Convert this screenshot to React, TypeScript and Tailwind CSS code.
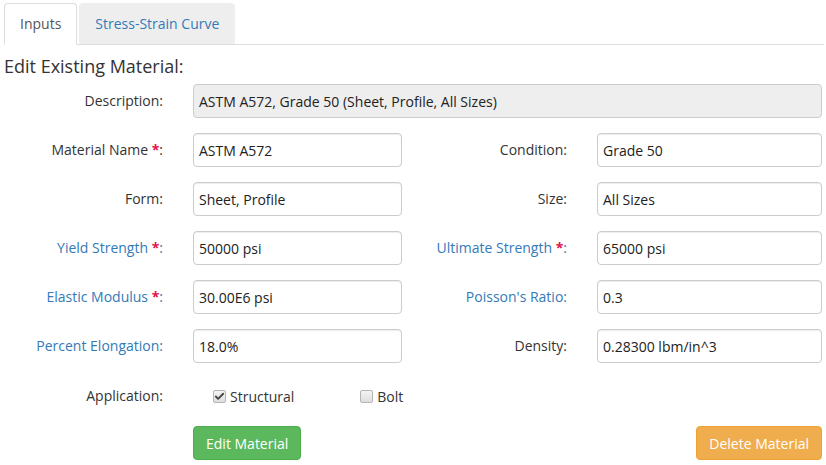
import { Check } from 'lucide-react';

type Field = { label: string; value: string; blue?: boolean; req?: boolean };

const rows: [Field, Field][] = [
  [
    { label: 'Material Name', value: 'ASTM A572', req: true },
    { label: 'Condition', value: 'Grade 50' },
  ],
  [
    { label: 'Form', value: 'Sheet, Profile' },
    { label: 'Size', value: 'All Sizes' },
  ],
  [
    { label: 'Yield Strength', value: '50000 psi', blue: true, req: true },
    { label: 'Ultimate Strength', value: '65000 psi', blue: true, req: true },
  ],
  [
    { label: 'Elastic Modulus', value: '30.00E6 psi', blue: true, req: true },
    { label: "Poisson's Ratio", value: '0.3', blue: true },
  ],
  [
    { label: 'Percent Elongation', value: '18.0%', blue: true },
    { label: 'Density', value: '0.28300 lbm/in^3' },
  ],
];

function Label({ f, width }: { f: Field; width: string }) {
  return (
    <div className={`${width} shrink-0 text-right leading-[34px] ${f.blue ? 'text-[#337ab7]' : 'text-[#333]'}`}>
      {f.label}
      {f.req && <span className="text-[#e0144c] font-bold"> *</span>}:
    </div>
  );
}

function Input({ value, width }: { value: string; width: string }) {
  return (
    <div
      className={`${width} shrink-0 ml-[30px] h-[34px] px-[5px] flex items-center border border-[#ccc] rounded-[4px] bg-white text-[#222] shadow-[inset_0_1px_1px_rgba(0,0,0,0.075)]`}
    >
      {value}
    </div>
  );
}

function Box({ checked }: { checked?: boolean }) {
  return (
    <span className="w-[13px] h-[13px] rounded-[2px] border border-[#b5b5b5] bg-gradient-to-b from-[#f4f4f4] to-[#dedede] flex items-center justify-center">
      {checked && <Check className="w-[11px] h-[11px] text-[#444]" strokeWidth={4} />}
    </span>
  );
}

export default function App() {
  return (
    <div className="w-[826px] h-[465px] bg-white text-[14px] text-[#333] font-['Open_Sans',sans-serif] overflow-hidden">
      <div className="pl-[4px] pr-[2px] pt-[3px]">
        {/* tabs */}
        <div className="flex border-b border-[#ddd] h-[42px]">
          <div className="h-[42px] px-[15px] pt-[10px] border border-[#ddd] border-b-white rounded-t-[4px] bg-white text-[#555] leading-[20px]">
            Inputs
          </div>
          <div className="ml-[2px] h-[41px] px-[15px] pt-[10px] border border-[#eee] rounded-t-[4px] bg-[#eee] text-[#337ab7] leading-[20px]">
            Stress-Strain Curve
          </div>
        </div>

        <h3 className="text-[18px] leading-[24px] mt-[9px] mb-[6px] text-[#333]">Edit Existing Material:</h3>

        {/* description */}
        <div className="flex">
          <div className="w-[159px] shrink-0 text-right leading-[34px]">Description:</div>
          <div className="flex-1 mr-[2px] ml-[30px] h-[34px] px-[5px] flex items-center border border-[#ccc] rounded-[4px] bg-[#eee] text-[#222]">
            ASTM A572, Grade 50 (Sheet, Profile, All Sizes)
          </div>
        </div>

        <div className="flex flex-col gap-[15px] mt-[15px]">
          {rows.map(([a, b]) => (
            <div key={a.label} className="flex">
              <Label f={a} width="w-[159px]" />
              <Input value={a.value} width="w-[209px]" />
              <Label f={b} width="w-[165px]" />
              <Input value={b.value} width="w-[225px]" />
            </div>
          ))}
        </div>

        {/* application */}
        <div className="flex items-center mt-[15px] h-[34px]">
          <div className="w-[159px] shrink-0 text-right">Application:</div>
          <div className="ml-[50px] flex items-center gap-[4px] pt-[2px]">
            <Box checked />
            <span>Structural</span>
          </div>
          <div className="ml-[66px] flex items-center gap-[4px] pt-[2px]">
            <Box />
            <span>Bolt</span>
          </div>
        </div>

        {/* buttons */}
        <div className="flex justify-between mt-[14px] pl-[189px] pr-[2px]">
          <button className="h-[34px] px-[12px] rounded-[4px] bg-[#5cb85c] border border-[#4cae4c] text-white">
            Edit Material
          </button>
          <button className="h-[34px] px-[12px] rounded-[4px] bg-[#f0ad4e] border border-[#eea236] text-white">
            Delete Material
          </button>
        </div>
      </div>
    </div>
  );
}
